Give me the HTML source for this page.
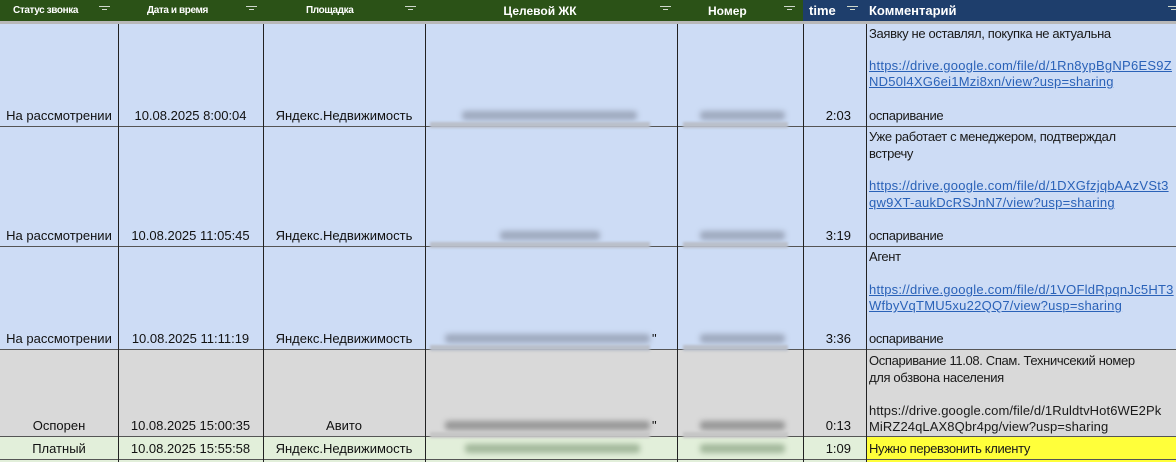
<!DOCTYPE html>
<html><head><meta charset="utf-8"><style>
*{margin:0;padding:0;box-sizing:border-box}
body{width:1176px;height:462px;overflow:hidden;background:#fff;position:relative;font-family:"Liberation Sans",sans-serif;color:#111}
.a{position:absolute}
.h{position:absolute;top:0;height:22px;color:#fff;font-weight:bold;font-size:11px;line-height:22px;text-align:center}
.f{position:absolute;top:5px;width:11px;height:8px}
.f:before,.f:after{content:"";position:absolute;left:0;right:0;height:1px;background:#cfd8cc}
.f:before{top:1px}.f:after{top:4px;left:3px;right:3px}
.row{position:absolute;left:0;width:1176px}
.vl{position:absolute;width:1px;background:#222}
.c{position:absolute;font-size:13px;text-align:center;white-space:nowrap}
.t{position:absolute;left:869px;font-size:13px;white-space:nowrap;letter-spacing:-0.35px;color:#1a1a1a}
.l{color:#2a62b8;text-decoration:underline;letter-spacing:0.25px}
.b{position:absolute;height:9px;background:#8a93a6;filter:blur(3px);opacity:.7;border-radius:3px}
.hs{text-align:left;font-size:10px;letter-spacing:-0.4px}
</style></head><body>
<div class="a" style="left:0;top:0;width:803px;height:22px;background:#2b5217"></div>
<div class="a" style="left:803px;top:0;width:373px;height:22px;background:#1e3e6c"></div>
<div class="a" style="left:0;top:21px;width:1176px;height:3px;background:#b8b8b8"></div>
<div class="h hs" style="left:13px">Статус звонка</div><div class="f" style="left:99px"></div>
<div class="h hs" style="left:147px">Дата и время</div><div class="f" style="left:246px"></div>
<div class="h hs" style="left:306px">Площадка</div><div class="f" style="left:405px"></div>
<div class="h" style="left:425px;width:230px;font-size:12px">Целевой ЖК</div><div class="f" style="left:660px"></div>
<div class="h" style="left:708px;text-align:left;font-size:12px">Номер</div><div class="f" style="left:784px"></div>
<div class="h" style="left:809px;text-align:left;font-size:13px">time</div><div class="f" style="left:847px"></div>
<div class="h" style="left:869px;text-align:left;font-size:13px">Комментарий</div><div class="f" style="left:1168px"></div>
<div class="row" style="top:24px;height:326px;background:#cddcf5"></div>
<div class="row" style="top:350px;height:87px;background:#d9d9d9"></div>
<div class="row" style="top:437px;height:25px;background:#e2efda"></div>
<div class="a" style="left:866px;top:437px;width:310px;height:25px;background:#ffff3a"></div>
<div class="a" style="left:0;top:126px;width:1176px;height:1px;background:#555"></div>
<div class="a" style="left:0;top:246px;width:1176px;height:1px;background:#555"></div>
<div class="a" style="left:0;top:349px;width:1176px;height:1px;background:#555"></div>
<div class="a" style="left:0;top:436px;width:1176px;height:1px;background:#555"></div>
<div class="a" style="left:0;top:459px;width:1176px;height:1px;background:#555"></div>
<div class="vl" style="left:118px;top:24px;height:438px"></div>
<div class="vl" style="left:263px;top:24px;height:438px"></div>
<div class="vl" style="left:425px;top:24px;height:438px"></div>
<div class="vl" style="left:677px;top:24px;height:438px"></div>
<div class="vl" style="left:803px;top:24px;height:438px"></div>
<div class="vl" style="left:866px;top:24px;height:438px"></div>
<div class="c" style="left:0;width:118px;top:108px">На рассмотрении</div>
<div class="c" style="left:118px;width:145px;top:108px">10.08.2025 8:00:04</div>
<div class="c" style="left:263px;width:162px;top:108px">Яндекс.Недвижимость</div>
<div class="c" style="left:803px;top:108px;text-align:right;width:48px">2:03</div>
<div class="c" style="left:0;width:118px;top:228px">На рассмотрении</div>
<div class="c" style="left:118px;width:145px;top:228px">10.08.2025 11:05:45</div>
<div class="c" style="left:263px;width:162px;top:228px">Яндекс.Недвижимость</div>
<div class="c" style="left:803px;top:228px;text-align:right;width:48px">3:19</div>
<div class="c" style="left:0;width:118px;top:331px">На рассмотрении</div>
<div class="c" style="left:118px;width:145px;top:331px">10.08.2025 11:11:19</div>
<div class="c" style="left:263px;width:162px;top:331px">Яндекс.Недвижимость</div>
<div class="c" style="left:803px;top:331px;text-align:right;width:48px">3:36</div>
<div class="c" style="left:0;width:118px;top:418px">Оспорен</div>
<div class="c" style="left:118px;width:145px;top:418px">10.08.2025 15:00:35</div>
<div class="c" style="left:263px;width:162px;top:418px">Авито</div>
<div class="c" style="left:803px;top:418px;text-align:right;width:48px">0:13</div>
<div class="c" style="left:0;width:118px;top:441px">Платный</div>
<div class="c" style="left:118px;width:145px;top:441px">10.08.2025 15:55:58</div>
<div class="c" style="left:263px;width:162px;top:441px">Яндекс.Недвижимость</div>
<div class="c" style="left:803px;top:441px;text-align:right;width:48px">1:09</div>
<div class="b" style="left:462px;top:111px;width:175px"></div>
<div class="a" style="left:430px;top:122px;width:220px;height:6px;background:#b9bfca;filter:blur(1px)"></div>
<div class="b" style="left:700px;top:111px;width:85px"></div>
<div class="a" style="left:683px;top:122px;width:105px;height:6px;background:#b9bfca;filter:blur(1px)"></div>
<div class="b" style="left:500px;top:231px;width:100px"></div>
<div class="a" style="left:430px;top:242px;width:220px;height:6px;background:#b9bfca;filter:blur(1px)"></div>
<div class="b" style="left:700px;top:231px;width:85px"></div>
<div class="a" style="left:683px;top:242px;width:105px;height:6px;background:#b9bfca;filter:blur(1px)"></div>
<div class="b" style="left:445px;top:334px;width:205px"></div><div class="c" style="left:652px;top:331px">"</div>
<div class="a" style="left:430px;top:345px;width:220px;height:6px;background:#b9bfca;filter:blur(1px)"></div>
<div class="b" style="left:700px;top:334px;width:85px"></div>
<div class="a" style="left:683px;top:345px;width:105px;height:6px;background:#b9bfca;filter:blur(1px)"></div>
<div class="b" style="left:445px;top:421px;width:205px;background:#7a7a7a"></div><div class="c" style="left:652px;top:418px">"</div>
<div class="a" style="left:430px;top:432px;width:220px;height:6px;background:#c6c6c6;filter:blur(1px)"></div>
<div class="b" style="left:700px;top:421px;width:85px;background:#7a7a7a"></div>
<div class="a" style="left:683px;top:432px;width:105px;height:6px;background:#c6c6c6;filter:blur(1px)"></div>
<div class="b" style="left:465px;top:444px;width:175px;background:#87a080"></div>
<div class="b" style="left:700px;top:444px;width:85px;background:#87a080"></div>
<div class="t" style="top:26px">Заявку не оставлял, покупка не актуальна</div>
<div class="t l" style="top:58px">https://drive.google.com/file/d/1Rn8ypBgNP6ES9Z</div>
<div class="t l" style="top:74px">ND50l4XG6ei1Mzi8xn/view?usp=sharing</div>
<div class="t" style="top:108px">оспаривание</div>
<div class="t" style="top:129px">Уже работает с менеджером, подтверждал</div>
<div class="t" style="top:146px">встречу</div>
<div class="t l" style="top:178px">https://drive.google.com/file/d/1DXGfzjqbAAzVSt3</div>
<div class="t l" style="top:195px">qw9XT-aukDcRSJnN7/view?usp=sharing</div>
<div class="t" style="top:228px">оспаривание</div>
<div class="t" style="top:249px">Агент</div>
<div class="t l" style="top:282px">https://drive.google.com/file/d/1VOFldRpqnJc5HT3</div>
<div class="t l" style="top:298px">WfbyVqTMU5xu22QQ7/view?usp=sharing</div>
<div class="t" style="top:331px">оспаривание</div>
<div class="t" style="top:353px">Оспаривание 11.08. Спам. Техничсекий номер</div>
<div class="t" style="top:370px">для обзвона населения</div>
<div class="t" style="top:403px;letter-spacing:0.1px">https://drive.google.com/file/d/1RuldtvHot6WE2Pk</div>
<div class="t" style="top:419px;letter-spacing:0.1px">MiRZ24qLAX8Qbr4pg/view?usp=sharing</div>
<div class="t" style="top:441px">Нужно перевзонить клиенту</div>
</body></html>
